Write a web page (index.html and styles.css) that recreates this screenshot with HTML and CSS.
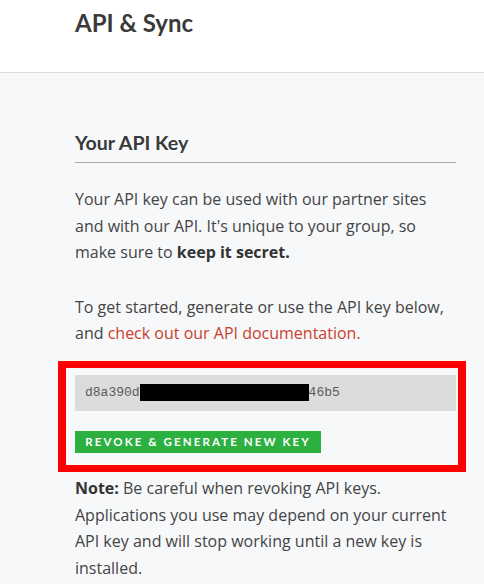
FILE: index.html
```html
<!DOCTYPE html>
<html>
<head>
<meta charset="utf-8">
<link rel="stylesheet" href="styles.css">
</head>
<body>
<header class="page-header">
  <h1 class="page-title">API &amp; Sync</h1>
</header>
<main class="content">
  <h2 class="section-title">Your API Key</h2>
  <p class="text">Your API key can be used with our partner sites and with our API. It's unique to your group, so make sure to <strong>keep it secret.</strong></p>
  <p class="text">To get started, generate or use the API key below, and <a class="link" href="#">check out our API documentation.</a></p>
  <div class="key-area">
    <div class="key-box"><span class="key-text">d8a390d<span class="redact"></span>46b5</span></div>
    <button class="btn-revoke">REVOKE &amp; GENERATE NEW KEY</button>
    <div class="highlight"></div>
  </div>
  <p class="text note"><strong>Note:</strong> Be careful when revoking API keys. Applications you use may depend on your current API key and will stop working until a new key is installed.</p>
</main>
</body>
</html>
```
FILE: styles.css
```css
html, body {
  margin: 0;
  padding: 0;
}
body {
  background: #f7f8fa;
  font-family: "Open Sans", "Liberation Sans", sans-serif;
  color: #444;
}
.page-header {
  background: #fff;
  border-bottom: 1px solid #dcdcdc;
  padding: 8px 0 0 75px;
  box-sizing: border-box;
  height: 73px;
}
.page-title {
  margin: 0;
  font-family: Lato, sans-serif;
  font-weight: 700;
  font-size: 24px;
  line-height: 30px;
  color: #3a3a3a;
}
.content {
  padding: 58px 28px 0 75px;
}
.section-title {
  margin: 0 0 23px;
  font-family: Lato, sans-serif;
  font-weight: 700;
  font-size: 19.6px;
  line-height: 24px;
  color: #3a3a3a;
  padding-bottom: 7px;
  border-bottom: 1px solid #aaaaaa;
}
.text {
  margin: 0 0 28px;
  font-size: 16px;
  line-height: 26.6px;
}
.text strong {
  font-weight: 700;
  color: #333;
}
.link {
  color: #c9402a;
  text-decoration: none;
}
.key-area {
  position: relative;
  margin-bottom: 22px;
}
.key-box {
  background: #dcdcdc;
  height: 36px;
  display: flex;
  align-items: center;
  padding-left: 10px;
}
.key-text {
  font-family: "Liberation Mono", monospace;
  font-size: 13px;
  color: #5a5a5a;
  display: flex;
  align-items: center;
}
.redact {
  display: inline-block;
  width: 169px;
  height: 17px;
  background: #000;
}
.btn-revoke {
  display: block;
  margin-top: 20px;
  height: 22px;
  width: 246px;
  padding: 0;
  border: none;
  background: #2cb040;
  color: #fff;
  font-family: Lato, sans-serif;
  font-weight: 700;
  font-size: 11.5px;
  letter-spacing: 2.1px;
  text-align: center;
}
.highlight {
  position: absolute;
  top: -14px;
  left: -17px;
  right: -10px;
  bottom: -19px;
  border: 7px solid #ff0000;
  border-left-width: 8px;
  border-right-width: 8px;
  pointer-events: none;
}
.note {
  margin-top: 0;
}
```
